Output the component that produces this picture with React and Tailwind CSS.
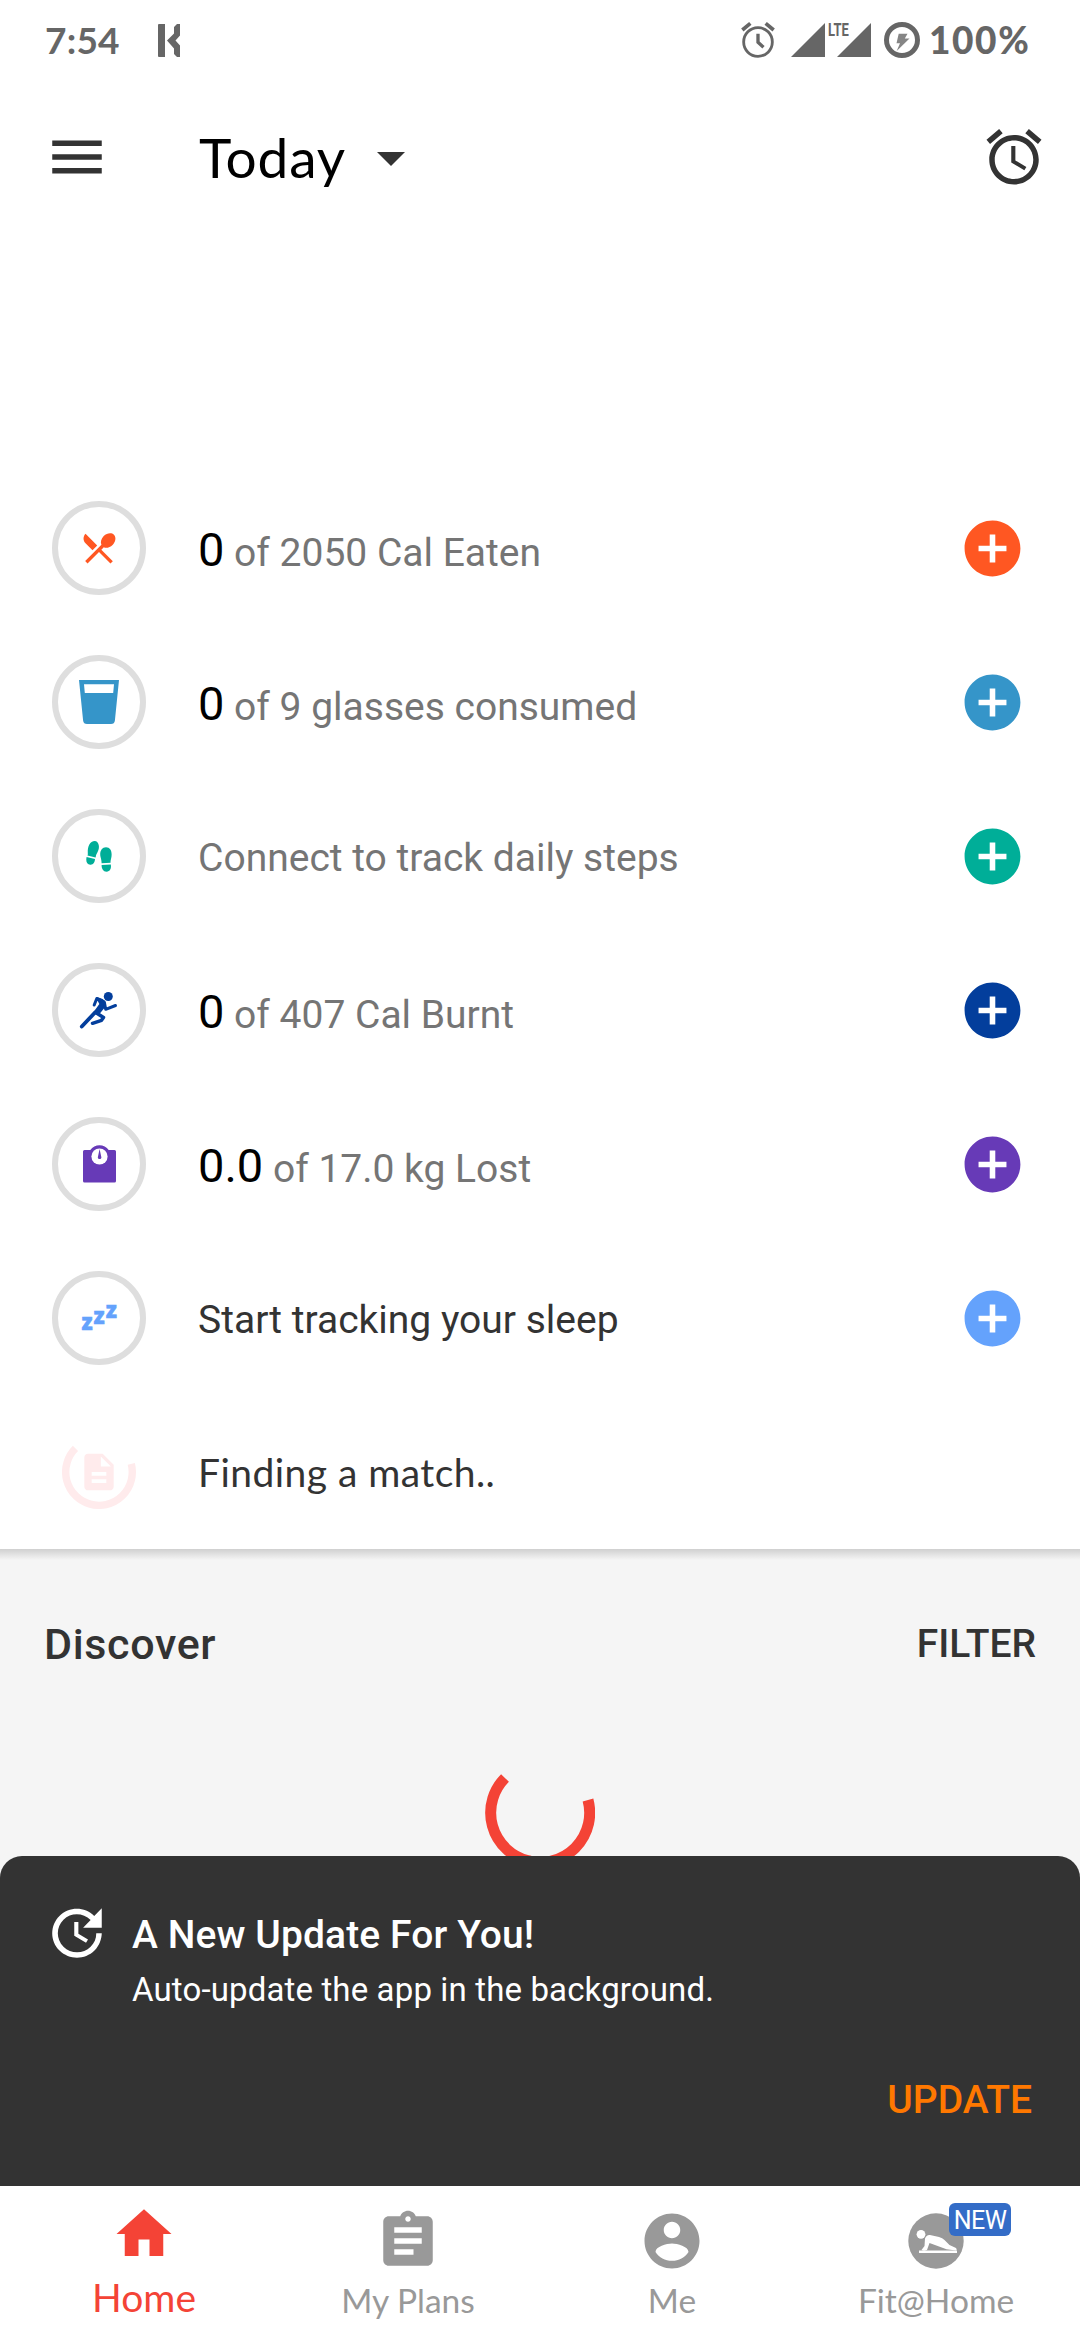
import React from "react";

const Svg = ({ className, children, viewBox = "0 0 24 24" }) => (
  <svg viewBox={viewBox} className={className} fill="currentColor" aria-hidden="true">
    {children}
  </svg>
);

const ALARM =
  "M22 5.72l-4.6-3.86-1.29 1.53 4.6 3.86L22 5.72zM7.88 3.39L6.6 1.86 2 5.71l1.29 1.53 4.59-3.85zM12.5 8H11v6l4.75 2.85.75-1.23-4-2.37V8zM12 4c-4.97 0-9 4.03-9 9s4.02 9 9 9c4.97 0 9-4.03 9-9s-4.03-9-9-9zm0 16c-3.87 0-7-3.13-7-7s3.13-7 7-7 7 3.13 7 7-3.13 7-7 7z";

function StatusBar() {
  return (
    <div className="flex h-20 items-center justify-between pl-[45px] pr-[50px] text-[#666]">
      <div className="flex items-center gap-[38px]">
        <span className="w-[75px] font-[Lato] text-[37px] font-bold leading-[42px] tracking-[0.2px]">7:54</span>
        <Svg viewBox="0 0 22 33" className="h-[33px] w-[22px]">
          <path d="M0 1Q0 0 1 0H7V33H1Q0 33 0 32ZM19 0H22V11.5L17.5 16.5 22 21.5V33H19L16 30V24.5L9 16.5 16 9.5V3Z" />
        </Svg>
      </div>
      <div className="flex items-center">
        <svg viewBox="0 0 24 24" className="h-10 w-10" fill="none" stroke="currentColor" strokeWidth="1.7">
          <circle cx="12" cy="13.2" r="8.6" />
          <path d="M2.6 6 7.4 2M21.4 6 16.6 2" strokeWidth="2.2" />
          <path d="M12 8.2V13.3L15.3 16.4" strokeWidth="2" />
        </svg>
        <div className="relative ml-[13px] flex gap-3">
          <Svg viewBox="0 0 34 34" className="h-[34px] w-[34px]"><path d="M34 0V34H0Z" /></Svg>
          <Svg viewBox="0 0 34 34" className="h-[34px] w-[34px]"><path d="M34 0V34H0Z" /></Svg>
          <span className="absolute left-[37px] top-[-2px] origin-left scale-x-[0.72] font-[Roboto] text-[18px] font-bold leading-[18px]">LTE</span>
        </div>
        <svg viewBox="0 0 36 36" className="ml-[13px] h-9 w-9">
          <circle cx="18" cy="18" r="15.5" fill="none" stroke="currentColor" strokeWidth="5" />
          <path d="M14.7 11.7H23.5L20.8 16.5H25.5L12.7 28.9 16 21.3H12.5Z" fill="currentColor" fillOpacity=".8" />
        </svg>
        <span className="ml-[9px] w-[101px] font-[Lato] text-[37px] font-black leading-[42px] tracking-[1.6px]">100%</span>
      </div>
    </div>
  );
}

function Header() {
  return (
    <header className="flex h-[154px] items-center pl-11 pr-[33px] text-[#333]">
      <Svg className="h-[66px] w-[66px]"><path d="M3 18h18v-2H3v2zm0-5h18v-2H3v2zm0-7v2h18V6H3z" /></Svg>
      <h1 className="ml-[89px] w-[148px] whitespace-nowrap font-[Lato] text-[55px] font-normal leading-[66px] tracking-[0.8px] text-black">Today</h1>
      <Svg viewBox="0 0 28 14" className="ml-[30px] mt-[3px] h-[14px] w-[28px]"><path d="M0 0H28L14 14Z" /></Svg>
      <Svg className="ml-auto h-[66px] w-[66px]"><path d={ALARM} /></Svg>
    </header>
  );
}

const FoodIcon = () => (
  <Svg className="h-10 w-10 text-[#ff5722]">
    <path d="M8.1 13.34l2.83-2.83L3.91 3.5c-1.56 1.56-1.56 4.09 0 5.66l4.19 4.18zm6.78-1.81c1.53.71 3.68.21 5.27-1.38 1.91-1.91 2.28-4.65.81-6.12-1.46-1.46-4.2-1.1-6.12.81-1.59 1.59-2.09 3.74-1.38 5.27L3.7 19.87l1.41 1.41L12 14.41l6.88 6.88 1.41-1.41L13.41 13l1.47-1.47z" />
  </Svg>
);

const GlassIcon = () => (
  <Svg viewBox="0 0 40 44" className="h-11 w-10 text-[#3595c9]">
    <path fillRule="evenodd" d="M0 0H40L35.9 40.5Q35.5 44 32 44H8Q4.500 44 4.100 40.500ZM5 4.300 5.800 13H34.200L35 4.300Z" />
  </Svg>
);

const StepsIcon = () => (
  <Svg viewBox="0 0 26 31" className="h-[31px] w-[26px] text-[#00ae98]">
    <path d="M8.800 0C4 0 1.500 5 1.800 12.200Q2 14 1.400 14.500L9.600 16.500Q10 13.500 11.600 11C14.500 6 12.500 0 8.800 0Z" />
    <path d="M.6 16 9 18C8.800 21.500 7.200 24 4.200 23.700 1 23.400-.4 20.500.6 16Z" />
    <path d="M20 6.200C15.500 6.200 13.400 11 14.500 15.800 15.200 18.500 15.600 20 15.600 22.300L24.600 21.700Q24.400 20 25 18C26.700 11.500 25 6.200 20 6.200Z" />
    <path d="M15.600 24 24.800 23.500C25.600 27.500 23.800 30.600 20.600 30.700 17.300 30.800 15.600 28 15.600 24Z" />
  </Svg>
);

const RunIcon = () => (
  <svg viewBox="80 990 40 40" className="h-10 w-10 text-[#033e9c]" fill="none" stroke="currentColor" strokeWidth="3.500" strokeLinecap="round" strokeLinejoin="round">
    <circle cx="109.300" cy="996.500" r="4.500" fill="currentColor" stroke="none" />
    <path d="M82.800 1026.500 96 1012.500" strokeWidth="3.800" />
    <path d="M98.500 998.500 105.500 1001.500 106 1005.500 99.500 1013.500 95 1013 101.500 1004Z" fill="currentColor" strokeWidth="2" />
    <path d="M95.200 1005 97.800 998.500 103 1000.500M105.500 1003 106.700 1009.300 116.500 1005.500" strokeWidth="3" />
    <path d="M97.500 1013 104.500 1017.500 102.500 1020.300 93.500 1023.300" />
  </svg>
);

const ScaleIcon = () => (
  <Svg viewBox="0 0 33 38" className="h-[38px] w-[33px] text-[#673ab7]">
    <path d="M1.500 5H7.300A11.300 11.300 0 0 1 25.700 5H31.500Q33 5 33 6.500V36Q33 37.500 31.500 37.500H1.500Q0 37.500 0 36V6.500Q0 5 1.500 5Z" />
    <circle cx="16.500" cy="11.500" r="8.100" fill="#fff" />
    <path d="M16.600 4 18.200 11.500A1.800 1.800 0 1 1 15 11.500Z" />
  </Svg>
);

const SleepIcon = () => (
  <svg viewBox="0 0 36 30" className="h-[30px] w-[36px] overflow-visible fill-[#64a2fc] stroke-[#64a2fc] font-['Open_Sans'] text-[22px] font-extrabold" strokeWidth="0.500">
    <text x="0.500" y="27">z</text>
    <text x="12.500" y="21">z</text>
    <text x="24.700" y="14.700">z</text>
  </svg>
);

const Ring = ({ children }) => (
  <div className="flex h-[94px] w-[94px] shrink-0 items-center justify-center rounded-full border-[6px] border-[#dedede]">{children}</div>
);

const rows = [
  { icon: <FoodIcon />, value: "0", text: "of 2050 Cal Eaten", tone: "text-[#ff5722]" },
  { icon: <GlassIcon />, value: "0", text: "of 9 glasses consumed", tone: "text-[#3595c9]" },
  { icon: <StepsIcon />, text: "Connect to track daily steps", tone: "text-[#00ae98]" },
  { icon: <RunIcon />, value: "0", text: "of 407 Cal Burnt", tone: "text-[#033e9c]" },
  { icon: <ScaleIcon />, value: "0.0", text: "of 17.0 kg Lost", tone: "text-[#673ab7]" },
  { icon: <SleepIcon />, text: "Start tracking your sleep", tone: "text-[#64a2fc]", dark: true },
];

function Row({ icon, value, text, tone, dark }) {
  const color = dark ? "text-[#333]" : "text-[#757575]";
  const shift = value ? "pt-[7px]" : "pt-[3px]";
  return (
    <div className="flex h-[154px] items-center pl-[52px] pr-[54px]">
      <Ring>{icon}</Ring>
      <p className={"ml-[52px] text-[39px] leading-[50px] " + color + " " + shift}>
        {value && <span className="text-[47px] text-black">{value}</span>}
        {value && " "}
        {text}
      </p>
      <Svg className={"ml-auto h-[67px] w-[67px] " + tone}>
        <path d="M12 2C6.480 2 2 6.480 2 12s4.480 10 10 10 10-4.480 10-10S17.520 2 12 2zm5 11h-4v4h-2v-4H7v-2h4V7h2v4h4v2z" />
      </Svg>
    </div>
  );
}

function MatchRow() {
  return (
    <div className="flex h-[154px] items-center pl-[62px]">
      <div className="relative flex h-[74px] w-[74px] items-center justify-center text-[#ffebec]">
        <svg viewBox="0 0 110 110" className="absolute inset-0 h-full w-full" fill="none" stroke="currentColor" strokeWidth="11">
          <path d="M20 20A49.500 49.500 0 1 0 103 43" />
        </svg>
        <Svg className="h-[44px] w-[44px]">
          <path d="M14 2H6c-1.100 0-2 .9-2 2v16c0 1.100.9 2 2 2h12c1.100 0 2-.9 2-2V8l-6-6zm2 16H8v-2h8v2zm0-4H8v-2h8v2zm-3-5V3.500L18.500 9H13z" />
        </Svg>
      </div>
      <p className="ml-[62px] font-[Lato] text-[39px] leading-[50px] tracking-[0.45px] text-[#333]">Finding a match..</p>
    </div>
  );
}

function Discover() {
  return (
    <section className="h-[307px] overflow-hidden bg-[#f5f5f5]">
      <div className="h-[11px] bg-linear-to-b from-[#d0d0d0] to-[#f5f5f5]" />
      <div className="flex h-[168px] items-center justify-between pl-11 pr-11 font-medium text-[#333]">
        <h2 className="text-[43px] leading-[50px] tracking-[0.65px]">Discover</h2>
        <button className="text-[39px] font-medium leading-[50px]">FILTER</button>
      </div>
      <div className="flex justify-center pt-[30px]">
        <svg viewBox="0 0 110 110" className="h-[110px] w-[110px] text-[#f44336]" fill="none" stroke="currentColor" strokeWidth="11">
          <path d="M20 20A49.500 49.500 0 1 0 103 42" />
        </svg>
      </div>
    </section>
  );
}

function UpdateBanner() {
  return (
    <section className="bg-[#f5f5f5]">
      <div className="flex h-[330px] flex-col justify-between rounded-t-[22px] bg-[#333] pl-11 pr-12 text-white">
        <div className="flex pt-[44px]">
          <Svg className="h-[66px] w-[66px]">
            <path d="M21 10.120h-6.780l2.740-2.820c-2.730-2.700-7.150-2.800-9.880-.1-2.730 2.710-2.730 7.080 0 9.790 2.730 2.710 7.150 2.710 9.880 0C18.320 15.650 19 14.080 19 12.100h2c0 1.980-.88 4.550-2.640 6.290-3.510 3.480-9.210 3.480-12.720 0-3.500-3.470-3.530-9.110-.02-12.580 3.510-3.470 9.140-3.470 12.650 0L21 3v7.120zM12.500 8v4.250l3.500 2.080-.72 1.210L11 13V8h1.500z" />
          </Svg>
          <div className="ml-[22px] pt-[10px]">
            <h3 className="text-[39px] font-medium leading-[50px] tracking-[0.1px]">A New Update For You!</h3>
            <p className="pt-[5px] text-[33px] leading-[50px] tracking-[0.14px]">Auto-update the app in the background.</p>
          </div>
        </div>
        <button className="mb-[61px] self-end text-[39px] font-medium leading-[50px] text-[#ff7800]">UPDATE</button>
      </div>
    </section>
  );
}

function NavItem({ children, label, active }) {
  return (
    <div className={active ? "flex flex-1 flex-col items-center pt-[15px] text-[#f44336]" : "flex flex-1 flex-col items-center pt-[22px] text-[#999]"}>
      {children}
      <span className={active ? "mt-[7px] font-[Lato] text-[39px] leading-[46px]" : "mt-[5px] whitespace-nowrap font-[Lato] text-[33.5px] leading-[42px]"}>{label}</span>
    </div>
  );
}

function BottomNav() {
  return (
    <nav className="flex h-[154px] bg-white px-3">
      <NavItem label="Home" active>
        <Svg className="h-[66px] w-[66px]"><path d="M10 20v-6h4v6h5v-8h3L12 3 2 12h3v8z" /></Svg>
      </NavItem>
      <NavItem label="My Plans">
        <Svg className="h-[66px] w-[66px]">
          <path d="M19 3h-4.180C14.400 1.840 13.300 1 12 1c-1.300 0-2.400.84-2.820 2H5c-1.100 0-2 .9-2 2v14c0 1.100.9 2 2 2h14c1.100 0 2-.9 2-2V5c0-1.100-.9-2-2-2zm-7 0c.55 0 1 .45 1 1s-.45 1-1 1-1-.45-1-1 .45-1 1-1zm2 14H7v-2h7v2zm3-4H7v-2h10v2zm0-4H7V7h10v2z" />
        </Svg>
      </NavItem>
      <NavItem label="Me">
        <Svg className="h-[66px] w-[66px]">
          <path d="M12 2C6.480 2 2 6.480 2 12s4.480 10 10 10 10-4.480 10-10S17.520 2 12 2zm0 3c1.660 0 3 1.340 3 3s-1.340 3-3 3-3-1.340-3-3 1.340-3 3-3zm0 14.200c-2.500 0-4.710-1.280-6-3.220.03-1.990 4-3.080 6-3.080 1.990 0 5.970 1.090 6 3.080-1.290 1.940-3.500 3.220-6 3.220z" />
        </Svg>
      </NavItem>
      <NavItem label="Fit@Home">
        <div className="relative h-[66px] w-[66px]">
          <Svg viewBox="903 2208 66 66" className="h-[66px] w-[66px]">
            <circle cx="936" cy="2241" r="27.700" />
            <g fill="#fff">
              <circle cx="921" cy="2234.300" r="4.400" />
              <path d="M925 2238.500Q926.500 2234.500 930 2235L939 2237Q942.500 2238 944.500 2240L949.500 2245 956 2248Q957.500 2249.500 956 2250.500L946.500 2249.300 929.500 2243 927 2250Q924 2251.500 921.500 2250L924.500 2246Z" />
              <path d="M919 2250.600H957V2253H919Z" />
            </g>
          </Svg>
          <span className="absolute left-[46px] top-[-5px] flex h-[33px] w-[62px] items-center justify-center rounded-[6px] bg-[#336cc7] pt-px text-[25px] leading-none tracking-[-0.500px] text-white">NEW</span>
        </div>
      </NavItem>
    </nav>
  );
}

export default function App() {
  return (
    <div className="flex h-[2340px] w-[1080px] flex-col overflow-hidden bg-white font-[Roboto,sans-serif]">
      <StatusBar />
      <Header />
      <main className="pt-[237px]">
        {rows.map((row) => (
          <Row key={row.text} {...row} />
        ))}
        <MatchRow />
      </main>
      <Discover />
      <UpdateBanner />
      <BottomNav />
    </div>
  );
}
